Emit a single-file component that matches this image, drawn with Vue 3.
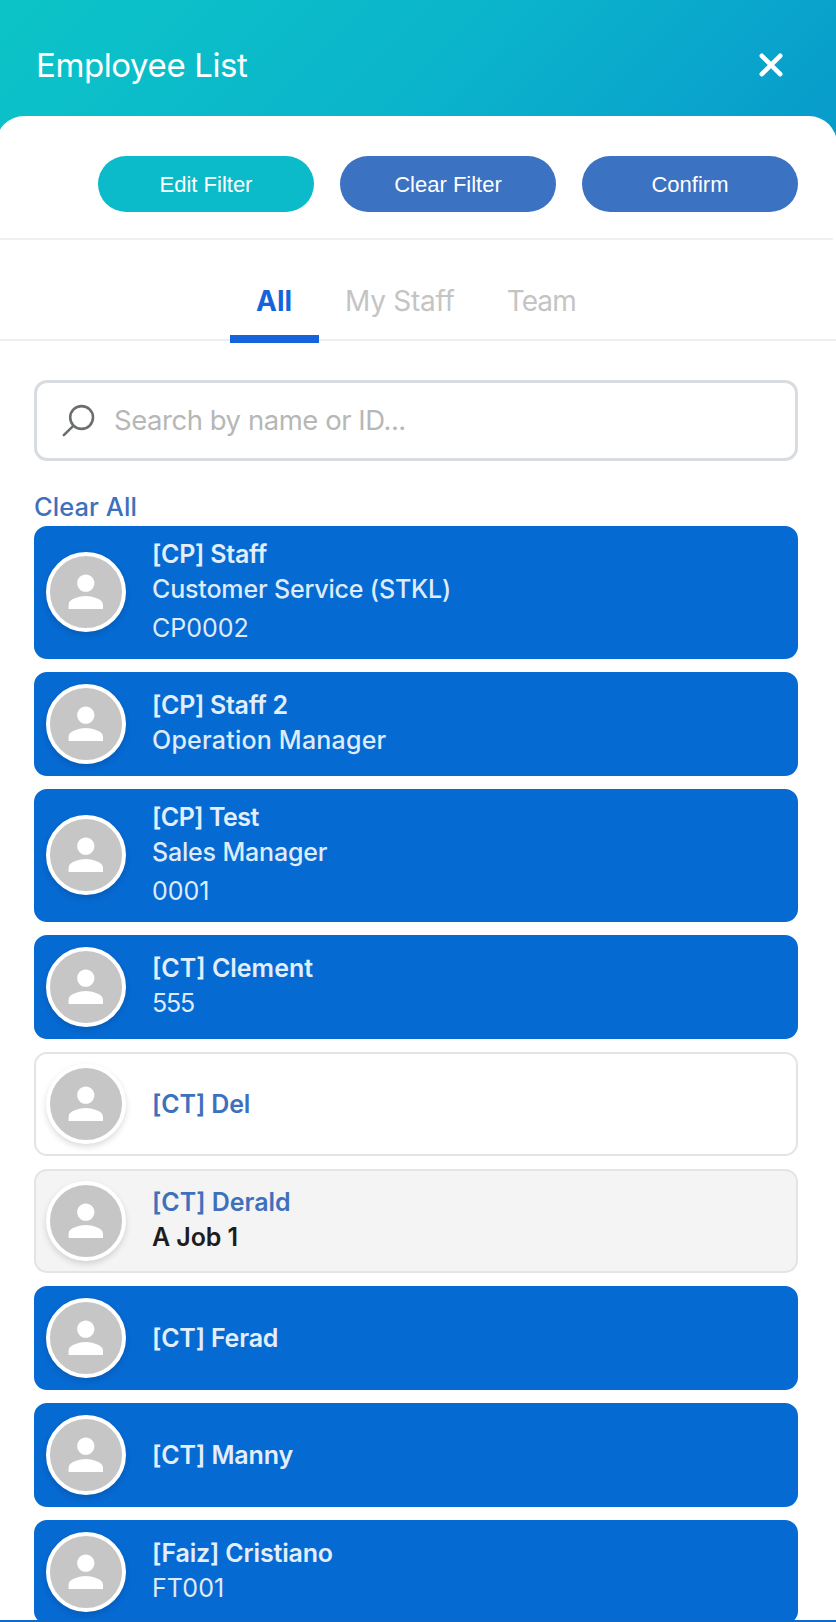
<script setup>
import { ref } from 'vue'

const actions = [
  { label: 'Edit Filter', tone: 'teal' },
  { label: 'Clear Filter', tone: 'blue' },
  { label: 'Confirm', tone: 'blue' },
]

const tabs = [
  { label: 'All', tracking: 0 },
  { label: 'My Staff', tracking: -0.25 },
  { label: 'Team', tracking: -0.9 },
]
const activeTab = ref('All')

const employees = ref([
  { name: '[CP] Staff', nameTracking: -0.26, job: 'Customer Service (STKL)', jobTracking: -0.17, code: 'CP0002', codeTracking: 0, state: 'selected' },
  { name: '[CP] Staff 2', nameTracking: -0.3, job: 'Operation Manager', jobTracking: 0.22, state: 'selected' },
  { name: '[CP] Test', nameTracking: -0.5, job: 'Sales Manager', jobTracking: -0.18, code: '0001', codeTracking: 0, state: 'selected' },
  { name: '[CT] Clement', nameTracking: 0, code: '555', codeTracking: -1.2, state: 'selected' },
  { name: '[CT] Del', nameTracking: -0.12, state: 'plain' },
  { name: '[CT] Derald', nameTracking: -0.02, job: 'A Job 1', jobTracking: -0.1, state: 'hovered' },
  { name: '[CT] Ferad', nameTracking: -0.2, state: 'selected' },
  { name: '[CT] Manny', nameTracking: -0.1, state: 'selected' },
  { name: '[Faiz] Cristiano', nameTracking: -0.17, code: 'FT001', codeTracking: 0.1, state: 'selected' },
])

const spacing = (value) => ({ letterSpacing: `${value || 0}px` })
</script>

<template>
  <div class="page">
    <header class="header">
      <h1 class="title">Employee List</h1>
      <button class="close" aria-label="Close">
        <svg width="24" height="24" viewBox="0 0 24 24" fill="none" stroke="#fff" stroke-width="4.6" stroke-linecap="round">
          <path d="M2.8 2.8 21.2 21.2M21.2 2.8 2.8 21.2" />
        </svg>
      </button>
    </header>

    <main class="panel">
      <div class="actions">
        <button v-for="a in actions" :key="a.label" class="pill" :class="a.tone">{{ a.label }}</button>
      </div>

      <nav class="tabs">
        <button
          v-for="t in tabs"
          :key="t.label"
          class="tab"
          :class="{ active: t.label === activeTab }"
          :style="spacing(t.tracking)"
          @click="activeTab = t.label"
        >{{ t.label }}</button>
      </nav>

      <section class="content">
        <label class="search">
          <svg class="lens" width="36" height="36" viewBox="0 0 36 36" fill="none" stroke="#6b6e70" stroke-width="2.6" stroke-linecap="round">
            <circle cx="21.6" cy="14.5" r="11.4" />
            <path d="M13.3 22.8 3.8 32.2" />
          </svg>
          <span class="placeholder">Search by name or ID...</span>
        </label>

        <a class="clear">Clear All</a>

        <ul class="list">
          <li
            v-for="e in employees"
            :key="e.name"
            class="card"
            :class="[e.state, { tall: e.job && e.code }]"
          >
            <span class="avatar">
              <svg width="51.6" height="51.6" viewBox="0 0 24 24" fill="#fff">
                <path d="M12 12c2.21 0 4-1.79 4-4s-1.79-4-4-4-4 1.79-4 4 1.79 4 4 4zm0 2c-2.67 0-8 1.34-8 4v2h16v-2c0-2.66-5.33-4-8-4z" />
              </svg>
            </span>
            <div class="info" :class="{ multi: e.job || e.code }">
              <div class="name" :style="spacing(e.nameTracking)">{{ e.name }}</div>
              <div v-if="e.job" class="job" :style="spacing(e.jobTracking)">{{ e.job }}</div>
              <div v-if="e.code" class="code" :style="spacing(e.codeTracking)">{{ e.code }}</div>
            </div>
          </li>
        </ul>
      </section>
    </main>
    <div class="footer"></div>
  </div>
</template>

<style>
html,
body {
  margin: 0;
  background: #fff;
}
</style>

<style scoped>
.page {
  width: 836px;
  height: 1622px;
  display: flex;
  flex-direction: column;
  overflow: hidden;
  font-family: Inter, "Liberation Sans", sans-serif;
  background: linear-gradient(135deg, #0cc4c7 0, #0bb5cb 345px, #089bcb 690px) top / 100% 150px no-repeat #fff;
}
button {
  border: 0;
  margin: 0;
  padding: 0;
  background: none;
  font: inherit;
}
.header {
  flex: none;
  height: 116px;
  box-sizing: border-box;
  padding: 14px 53px 0 36px;
  display: flex;
  align-items: center;
  justify-content: space-between;
}
.title {
  margin: 0;
  font-size: 33px;
  line-height: 40px;
  font-weight: 400;
  letter-spacing: -0.4px;
  color: #fff;
}
.close {
  width: 24px;
  height: 24px;
  display: flex;
}
.panel {
  flex: 1;
  min-height: 0;
  margin: 0 -1px 0 -4px;
  padding: 0 1px 0 4px;
  overflow: hidden;
  border-radius: 28px 28px 0 0;
  background: #fff;
}
.actions {
  display: flex;
  justify-content: flex-end;
  gap: 26px;
  width: 833px;
  box-sizing: border-box;
  padding: 40px 35px 26px 0;
  border-bottom: 2px solid #f0f0f0;
}
.pill {
  width: 216px;
  height: 56px;
  padding-top: 1px;
  border-radius: 28px;
  color: #fff;
  font: 22px/55px "Liberation Sans", Arial, sans-serif;
}
.teal {
  background: #0bbbc9;
}
.blue {
  background: #3b72c2;
}
.tabs {
  height: 99px;
  display: flex;
  padding-left: 230px;
  border-bottom: 2px solid #eee;
}
.tab {
  height: 103px;
  box-sizing: border-box;
  padding: 43px 26px 0;
  border-bottom: 8px solid transparent;
  display: flex;
  font-size: 28px;
  line-height: 36px;
  color: #c4c4c4;
}
.tab.active {
  width: 89px;
  color: #1564dc;
  font-weight: 700;
  border-bottom-color: #1564dc;
}
.content {
  padding: 39px 38px 0 34px;
}
.search {
  height: 81px;
  box-sizing: border-box;
  border: 3px solid #d8dbe0;
  border-radius: 13px;
  display: flex;
  align-items: center;
  padding-left: 23px;
}
.lens {
  flex: none;
  margin-top: 1px;
}
.placeholder {
  margin: 0 0 1px 18px;
  font-size: 27.5px;
  letter-spacing: -0.46px;
  color: #b7b7b7;
}
.clear {
  display: block;
  margin-top: 26px;
  margin-bottom: -1px;
  font-size: 25.5px;
  line-height: 40px;
  font-weight: 500;
  letter-spacing: 0.05px;
  color: #3e70bb;
}
.list {
  list-style: none;
  margin: 0;
  padding: 0;
  display: flex;
  flex-direction: column;
  gap: 13px;
}
.card {
  flex: none;
  height: 104px;
  box-sizing: border-box;
  padding: 0 10px;
  border: 2px solid #e4e4e4;
  border-radius: 13px;
  display: flex;
  align-items: center;
  gap: 26px;
  background: #fff;
  color: #1d1d1d;
}
.card.tall {
  height: 133px;
}
.card.hovered {
  background: #f4f4f4;
}
.card.selected {
  background: #066ad3;
  border-color: #066ad3;
  color: #deebfa;
}
.avatar {
  flex: none;
  width: 80px;
  height: 80px;
  box-sizing: border-box;
  border: 4px solid #fff;
  border-radius: 50%;
  background: #c6c6c6;
  box-shadow: 0 3px 6px rgba(0, 0, 0, 0.14);
  display: flex;
  align-items: center;
  justify-content: center;
}
.tall .avatar {
  margin-bottom: 1px;
}
.info {
  font-size: 25px;
  line-height: 35px;
  white-space: nowrap;
}
.info.multi {
  padding-bottom: 2px;
}
.name {
  font-weight: 600;
  color: #3e70bb;
}
.selected .name {
  color: #e3eefb;
}
.job {
  font-weight: 500;
}
.hovered .job {
  font-weight: 600;
}
.job + .code {
  margin-top: 4px;
}
.footer {
  flex: none;
  height: 2px;
  background: #0d6bc9;
}
</style>
